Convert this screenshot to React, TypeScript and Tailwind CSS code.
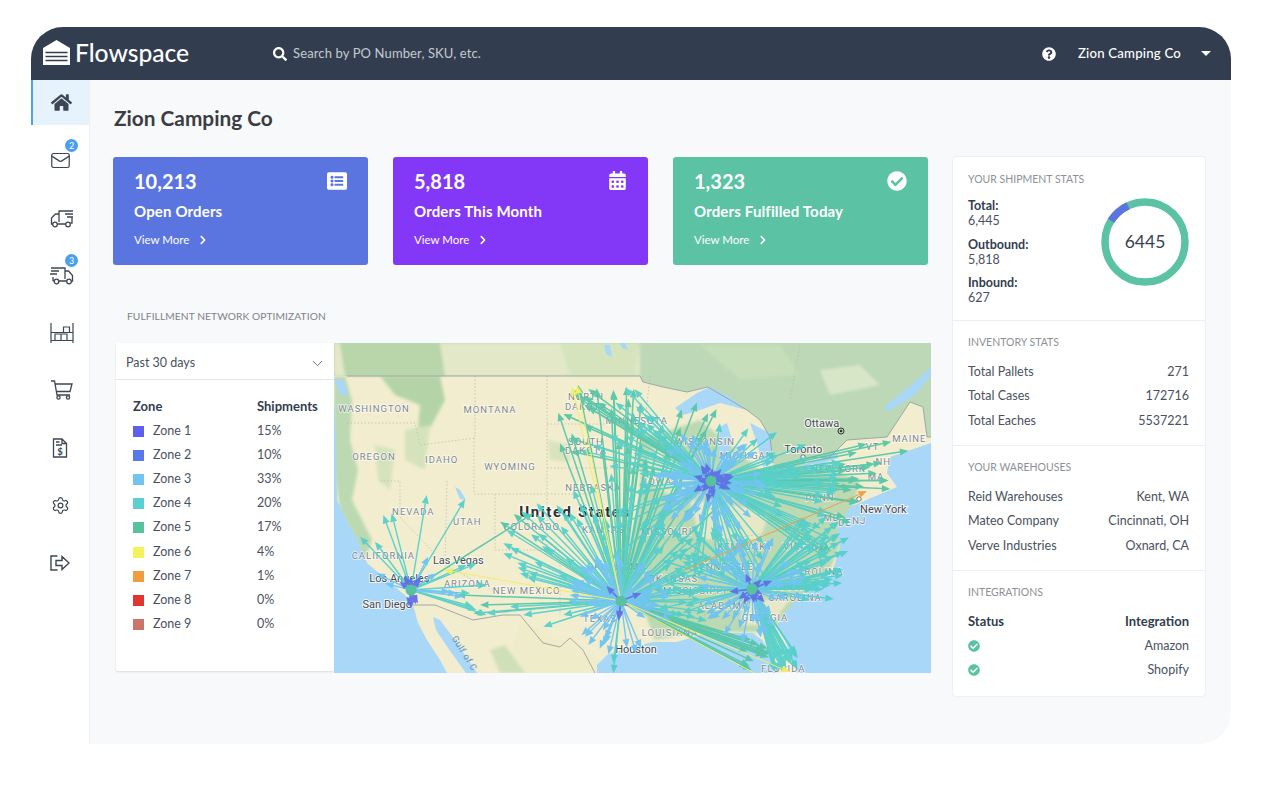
import { FaCalendarAlt, FaCheckCircle, FaChevronRight, FaHome, FaListAlt, FaQuestionCircle, FaSearch } from "react-icons/fa";
import { ChevronDown, Mail, Settings } from "lucide-react";
import type { ReactNode } from "react";

const cards = [
  { value: "10,213", label: "Open Orders", bg: "bg-[#5a75e0]", icon: <FaListAlt size={20} /> },
  { value: "5,818", label: "Orders This Month", bg: "bg-[#8438f7]", icon: <FaCalendarAlt size={19} /> },
  { value: "1,323", label: "Orders Fulfilled Today", bg: "bg-[#5bc2a4]", icon: <FaCheckCircle size={20} /> },
];

const zones = [
  { name: "Zone 1", pct: "15%", color: "bg-[#5f5fee]" },
  { name: "Zone 2", pct: "10%", color: "bg-[#5a78ec]" },
  { name: "Zone 3", pct: "33%", color: "bg-[#74c4f2]" },
  { name: "Zone 4", pct: "20%", color: "bg-[#5bcfd2]" },
  { name: "Zone 5", pct: "17%", color: "bg-[#58c1a0]" },
  { name: "Zone 6", pct: "4%", color: "bg-[#f5f25f]" },
  { name: "Zone 7", pct: "1%", color: "bg-[#ee9d40]" },
  { name: "Zone 8", pct: "0%", color: "bg-[#e3352f]" },
  { name: "Zone 9", pct: "0%", color: "bg-[#c9756a]" },
];

function TruckOut() {
  return (
    <svg width="24" height="20" viewBox="0 0 24 20" fill="none" stroke="currentColor" strokeWidth="1.3" className="ml-[3px]">
      <path d="M9 14V3h14M15 6h8M17 9h6M22 9v6h-1.5M15.500 16H7.500M9 6H5.500L1.500 10v6h1" />
      <circle cx="5" cy="16.500" r="2.300" />
      <circle cx="18" cy="16.500" r="2.300" />
    </svg>
  );
}

function TruckIn() {
  return (
    <svg width="24" height="20" viewBox="0 0 24 20" fill="none" stroke="currentColor" strokeWidth="1.3" className="ml-[3px]">
      <path d="M1 3h14v11M1 6h8M0 9h7M3 12v3.500h1M9 16h7.500M15 6h3.500l4 4.500v5.500h-1" />
      <circle cx="6.500" cy="16.500" r="2.300" />
      <circle cx="19" cy="16.500" r="2.300" />
    </svg>
  );
}

function Warehouse() {
  return (
    <svg width="24" height="20" viewBox="0 0 24 20" fill="none" stroke="currentColor" strokeWidth="1.2" className="ml-[3px]">
      <path d="M1 0v20M23 0v20M1 17.500h22M1 9.500h22" />
      <path d="M5 17V11h12v6M11 11v6M13.500 9V4h6v5" />
    </svg>
  );
}

function Cart() {
  return (
    <svg width="22" height="20" viewBox="0 0 22 20" fill="none" stroke="currentColor" strokeWidth="1.3" className="ml-[3px]">
      <path d="M0 1h3.500l2.500 14h13M4.200 4H21l-2 7.500H5.500" />
      <circle cx="7.500" cy="17.500" r="1.600" />
      <circle cx="17" cy="17.500" r="1.600" />
    </svg>
  );
}

function Invoice() {
  return (
    <svg width="16" height="20" viewBox="0 0 16 20" fill="none" stroke="currentColor" strokeWidth="1.3">
      <path d="M1.500 1h8.500l4.500 4.500v13.500h-13zM10 1v4.500h4.500M4 4h3.500M4 7h6" />
      <text x="8" y="16.500" textAnchor="middle" fontSize="9.500" fontWeight="700" fill="currentColor" stroke="none">$</text>
    </svg>
  );
}

function Logout() {
  return (
    <svg width="20" height="16" viewBox="0 0 20 16" fill="none" stroke="currentColor" strokeWidth="1.4">
      <path d="M7.500 1H1v14h6.500M6 5.500h6V1.500L19 8l-7 6.500V10.500H6z" />
    </svg>
  );
}

const navItems: { icon: ReactNode; badge?: string; active?: boolean }[] = [
  { icon: <FaHome size={21} />, active: true },
  { icon: <Mail size={21} strokeWidth={1.4} />, badge: "2" },
  { icon: <TruckOut /> },
  { icon: <TruckIn />, badge: "3" },
  { icon: <Warehouse /> },
  { icon: <Cart /> },
  { icon: <Invoice /> },
  { icon: <Settings size={19} strokeWidth={1.5} /> },
  { icon: <Logout /> },
];

// ---- map ----

type Pt = [number, number];
const c5 = (x: number, y: number): Pt => [330 + x / 3, 340 + y / 3];
const c6 = (x: number, y: number): Pt => [620 + x / 3, 340 + y / 3];

const LA: Pt = [411, 590];
const DAL: Pt = [621, 601];
const MID: Pt = [711, 481];
const ATL: Pt = [752, 589];

function makeRng(seed: number) {
  let s = seed;
  return () => {
    s = (s + 0x6d2b79f5) | 0;
    let t = Math.imul(s ^ (s >>> 15), 1 | s);
    t = (t + Math.imul(t ^ (t >>> 7), 61 | t)) ^ t;
    return ((t ^ (t >>> 14)) >>> 0) / 4294967296;
  };
}

type Arrow = { from: Pt; to: Pt; color: string; width: number; rank: number };

function zoneOf(from: Pt, to: Pt) {
  const d = Math.hypot(to[0] - from[0], to[1] - from[1]);
  if (d < 24) return { color: "#5a6de8", width: 1.6, rank: 5 };
  if (d < 58) return { color: "#6cc3f4", width: 1.4, rank: 4 };
  if (d < 135) return { color: "#52cfca", width: 1.4, rank: 3 };
  return { color: "#55c6a8", width: 1.5, rank: 2 };
}

function buildArrows() {
  const rng = makeRng(42);
  const out: Arrow[] = [];
  const add = (from: Pt, to: Pt) => out.push({ from, to, ...zoneOf(from, to) });
  const cloud = (from: Pt, x0: number, y0: number, x1: number, y1: number, n: number) => {
    for (let i = 0; i < n; i++) add(from, [x0 + rng() * (x1 - x0), y0 + rng() * (y1 - y0)]);
  };
  const ring = (from: Pt, r0: number, r1: number, n: number) => {
    for (let i = 0; i < n; i++) {
      const a = rng() * Math.PI * 2;
      const r = r0 + rng() * (r1 - r0);
      add(from, [from[0] + Math.cos(a) * r, from[1] + Math.sin(a) * r]);
    }
  };

  // west coast hub, read off the reference
  const laTargets: Pt[] = [
    c5(290, 465), c5(405, 478), c5(185, 520), c5(160, 525), c5(90, 590), c5(135, 605), c5(295, 650),
    c5(320, 700), c5(140, 700), c5(165, 730), c5(470, 735), c5(380, 760), c5(400, 770), c5(420, 760),
    c5(440, 810), c5(470, 825), c5(610, 520), c5(440, 670), c5(410, 675), c5(360, 755), c5(430, 800),
  ];
  laTargets.forEach((t) => add(LA, t));
  ring(LA, 10, 20, 9);

  // texas hub
  const dalTargets: Pt[] = [
    c5(510, 545), c5(530, 570), c5(620, 490), c5(680, 495), c5(740, 535), c5(520, 610), c5(520, 640),
    c5(570, 700), c5(640, 860), c5(775, 915), c5(820, 915), c5(850, 970), c5(850, 1000), c5(450, 795),
    c5(430, 820), c5(470, 820), c5(540, 800), c5(580, 825), c5(700, 825), c5(380, 765), c5(690, 310),
    c5(685, 218), c5(745, 135), c5(800, 145), c5(850, 150), c5(890, 140), c5(725, 280), c5(730, 450),
    c5(750, 490),
  ];
  dalTargets.forEach((t) => add(DAL, t));
  cloud(DAL, 510, 510, 610, 590, 26);
  cloud(DAL, 590, 385, 720, 520, 42);
  cloud(DAL, 640, 520, 720, 600, 26);
  cloud(DAL, 640, 590, 710, 625, 14);
  cloud(DAL, 745, 640, 790, 672, 14);
  ring(DAL, 26, 56, 46);
  ring(DAL, 10, 22, 4);

  // midwest hub
  cloud(MID, 560, 385, 660, 470, 34);
  cloud(MID, 600, 470, 680, 560, 18);
  cloud(MID, 790, 440, 892, 490, 32);
  cloud(MID, 770, 490, 860, 560, 26);
  cloud(MID, 690, 530, 770, 590, 20);
  cloud(MID, 660, 430, 780, 530, 40);
  add(MID, c6(385, 265));
  add(MID, c6(300, 250));
  add(MID, c6(740, 312));
  add(MID, c6(865, 332));
  add(MID, c6(750, 382));
  ring(MID, 26, 56, 52);
  ring(MID, 11, 23, 15);

  // southeast hub
  cloud(ATL, 772, 648, 800, 672, 26);
  cloud(ATL, 790, 515, 850, 590, 42);
  cloud(ATL, 800, 575, 835, 600, 12);
  cloud(ATL, 650, 520, 720, 590, 12);
  cloud(ATL, 640, 590, 720, 620, 10);
  cloud(ATL, 705, 520, 745, 560, 10);
  ring(ATL, 26, 56, 36);
  ring(ATL, 11, 23, 10);

  return out.sort((a, b) => a.rank - b.rank);
}

const arrows = buildArrows();

function ArrowLine({ from, to, color, width }: { from: Pt; to: Pt; color: string; width: number }) {
  const dx = to[0] - from[0];
  const dy = to[1] - from[1];
  const len = Math.hypot(dx, dy) || 1;
  const ux = dx / len;
  const uy = dy / len;
  const size = 8.5;
  const half = 3.5;
  const bx = to[0] - ux * size;
  const by = to[1] - uy * size;
  const points = `${to[0]},${to[1]} ${bx - uy * half},${by + ux * half} ${bx + uy * half},${by - ux * half}`;
  return (
    <g>
      <line x1={from[0]} y1={from[1]} x2={bx} y2={by} stroke={color} strokeWidth={width} />
      <polygon points={points} fill={color} />
    </g>
  );
}

const poly = (pts: Pt[]) => pts.map((p) => p.join(",")).join(" ");

const stateLabels: [string, number, number][] = [
  ["WASHINGTON", ...c5(132, 205)], ["MONTANA", ...c5(480, 207)], ["OREGON", ...c5(132, 348)], ["IDAHO", ...c5(335, 358)],
  ["WYOMING", ...c5(540, 380)], ["NEVADA", ...c5(250, 515)], ["UTAH", ...c5(412, 543)], ["CALIFORNIA", ...c5(160, 647)],
  ["ARIZONA", ...c5(412, 730)], ["NEW MEXICO", ...c5(590, 752)], ["COLORADO", ...c5(605, 560)], ["KANSAS", ...c5(820, 567)],
  ["NEBRASKA", ...c5(790, 443)], ["SOUTH", ...c5(768, 303)], ["DAKOTA", ...c5(768, 331)], ["NORTH", ...c5(768, 170)],
  ["DAKOTA", ...c5(768, 199)], ["TEXAS", ...c5(810, 835)], ["OKLAHOMA", ...c5(860, 680)], ["MINNESOTA", ...c5(920, 240)],
  ["MAINE", ...c6(868, 295)], ["VT", ...c6(758, 320)], ["NH", ...c6(790, 365)], ["NEW YORK", ...c6(655, 385)],
  ["MA", ...c6(768, 408)], ["PENN", ...c6(600, 472)], ["MD", ...c6(635, 532)], ["DE", ...c6(675, 548)], ["NJ", ...c6(718, 540)],
  ["MICHIGAN", ...c6(380, 347)], ["WISCONSIN", ...c6(255, 305)], ["KENTUCKY", ...c6(375, 620)], ["VIRGINIA", ...c6(560, 620)],
  ["TENNESSEE", ...c6(310, 678)], ["ARKANSAS", ...c6(150, 715)], ["MISSISSIPPI", ...c6(225, 752)], ["ALABAMA", ...c6(310, 795)],
  ["GEORGIA", ...c6(435, 832)], ["LOUISIANA", ...c6(150, 877)], ["CAROLINA", ...c6(590, 695)], ["SOUTH", ...c6(510, 738)],
  ["CAROLINA", ...c6(525, 772)], ["FLORIDA", ...c6(490, 985)], ["MISSOURI", ...c6(140, 575)], ["IOWA", ...c6(115, 425)],
];

const cityLabels: [string, number, number][] = [
  ["Las Vegas", ...c5(385, 660)], ["Los Angeles", ...c5(208, 715)], ["San Diego", ...c5(172, 792)], ["Houston", ...c5(918, 928)],
  ["Ottawa", ...c6(605, 250)], ["Toronto", ...c6(550, 327)], ["New York", ...c6(790, 507)],
];

function NetworkMap() {
  return (
    <svg className="block h-[330px] w-[597px] shrink-0" viewBox="334 343 597 330" style={{ fontFamily: "Roboto, sans-serif" }}>
      <defs>
        <filter id="soft" x="-10%" y="-10%" width="120%" height="120%">
          <feGaussianBlur stdDeviation="1.6" />
        </filter>
      </defs>
      <rect x="334" y="343" width="597" height="330" fill="#f2edcf" />

      {/* green terrain */}
      <g filter="url(#soft)" fill="#bcd9b2">
        <polygon points={poly([[334, 376], [345, 376], [352, 400], [350, 440], [358, 470], [352, 500], [372, 540], [365, 560], [340, 510], [334, 470]])} />
        <polygon points={poly([[380, 376], [440, 376], [445, 400], [428, 432], [418, 428], [420, 405], [395, 395]])} fill="#b4d4a8" />
        <polygon points={poly([[405, 430], [430, 425], [425, 470], [405, 460]])} fill="#d5e3bd" />
        <polygon points={poly([[375, 445], [395, 450], [390, 490], [378, 480]])} fill="#d5e3bd" />
        <polygon points={poly([[548, 440], [570, 445], [570, 462], [550, 460]])} fill="#d7e4bd" />
        <polygon points={poly([[640, 440], [700, 420], [760, 470], [830, 470], [860, 480], [850, 520], [830, 570], [790, 610], [770, 632], [700, 632], [655, 640], [625, 560], [640, 500]])} />
        <polygon points={poly([[655, 445], [700, 475], [680, 500], [640, 480]])} fill="#e5e7c4" />
        <polygon points={poly([[690, 500], [770, 510], [760, 540], [700, 540]])} fill="#e9e8c6" />
        <polygon points={poly([[745, 600], [790, 600], [770, 625], [740, 625]])} fill="#e9e8c6" />
        <polygon points={poly([[520, 620], [560, 640], [600, 660], [600, 673], [505, 673]])} fill="#eeecc9" />
        <polygon points={poly([[490, 650], [505, 645], [525, 673], [500, 673]])} fill="#cfe0b8" />
      </g>

      {/* canada */}
      <polygon
        points={poly([[334, 343], [931, 343], [931, 437], [927, 437], [923, 407], [910, 402], [887, 437], [847, 440], [830, 457], [807, 458], [803, 468], [780, 480], [773, 463], [770, 437], [760, 420], [747, 410], [708, 387], [687, 392], [663, 387], [643, 382], [640, 376], [334, 376]])}
        fill="#bcd8b6"
      />
      <g filter="url(#soft)">
        <polygon points={poly([[334, 343], [640, 343], [640, 376], [334, 376]])} fill="#e3e8c8" />
        <polygon points={poly([[340, 343], [440, 343], [445, 376], [345, 376]])} fill="#b8d6aa" />
        <polygon points={poly([[560, 343], [640, 343], [635, 376], [570, 376]])} fill="#d6e4be" />
        <polygon points={poly([[700, 345], [780, 345], [800, 375], [740, 380]])} fill="#c6deb9" />
        <polygon points={poly([[820, 370], [860, 365], [880, 385], [830, 395]])} fill="#d8e6c8" />
      </g>

      {/* water */}
      <g fill="#a9d7f7">
        <polygon points={poly([[334, 400], [336, 440], [337, 500], [350, 527], [358, 540], [367, 563], [387, 580], [407, 597], [413, 605], [418, 623], [427, 640], [440, 660], [447, 673], [334, 673]])} />
        <polygon points={poly([[433, 617], [440, 620], [455, 640], [477, 673], [466, 673], [448, 648], [436, 630]])} />
        <polygon points={poly([[597, 673], [597, 665], [607, 655], [620, 650], [653, 642], [677, 642], [693, 637], [707, 633], [753, 633], [762, 640], [770, 652], [778, 673]])} />
        <polygon points={poly([[797, 673], [785, 640], [777, 625], [787, 610], [807, 590], [833, 570], [840, 547], [837, 530], [850, 507], [897, 487], [887, 473], [890, 457], [931, 443], [931, 673]])} />
        <polygon points={poly([[931, 367], [931, 375], [915, 395], [887, 412], [885, 406], [908, 388]])} />
        <polygon points={poly([[675, 408], [697, 393], [710, 387], [730, 397], [747, 410], [720, 403], [700, 410], [683, 415]])} />
        <polygon points={poly([[720, 427], [727, 423], [732, 440], [723, 467], [718, 453]])} />
        <polygon points={poly([[750, 423], [770, 433], [773, 463], [763, 467], [757, 443]])} />
        <polygon points={poly([[777, 477], [803, 467], [800, 472], [780, 482]])} />
        <polygon points={poly([[802, 465], [837, 453], [838, 458], [805, 470]])} />
        <polygon points={poly([[334, 378], [345, 382], [348, 395], [340, 395]])} />
        <polygon points={poly([[455, 487], [460, 490], [466, 500], [460, 499]])} />
        <polygon points={poly([[604, 345], [610, 345], [612, 357], [606, 354]])} />
        <polygon points={poly([[620, 343], [625, 343], [628, 350], [622, 348]])} />
      </g>

      {/* borders */}
      <g fill="none" stroke="#9aa0a4" strokeWidth="0.9">
        <polyline points={poly([[347, 376], [640, 376], [643, 382], [663, 387], [687, 392], [708, 387], [747, 410], [760, 420], [770, 437], [773, 463]])} />
        <polyline points={poly([[807, 458], [830, 457], [847, 440], [887, 437], [910, 402], [923, 407], [927, 437], [931, 437]])} />
        <polyline points={poly([[413, 605], [435, 605], [473, 620], [503, 615], [520, 615], [543, 643], [560, 647], [570, 638], [583, 650], [595, 673]])} />
      </g>
      <g fill="none" stroke="#b6b9a8" strokeWidth="0.7" strokeDasharray="1.500 2">
        <polyline points={poly([[380, 481], [400, 481], [400, 517], [445, 565]])} />
        <polyline points={poly([[347, 423], [372, 423], [415, 423], [420, 445], [475, 438], [475, 376]])} />
        <polyline points={poly([[474, 438], [474, 494], [595, 494]])} />
        <polyline points={poly([[447, 481], [445, 565], [493, 590]])} />
        <polyline points={poly([[495, 494], [495, 550], [560, 550], [560, 615]])} />
        <polyline points={poly([[547, 376], [547, 490], [547, 550]])} />
        <polyline points={poly([[547, 424], [630, 424]])} />
        <polyline points={poly([[547, 468], [640, 468]])} />
        <polyline points={poly([[650, 376], [640, 470], [650, 540], [650, 610]])} />
        <polyline points={poly([[650, 540], [720, 540], [790, 530]])} />
        <polyline points={poly([[700, 590], [708, 633]])} />
        <polyline points={poly([[800, 345], [790, 400]])} />
      </g>

      {/* labels */}
      <g textAnchor="middle" fontSize="9.500" letterSpacing="1" fill="#80868a" stroke="#ffffff" strokeWidth="1.6" paintOrder="stroke" strokeOpacity="0.75">
        {stateLabels.map(([name, x, y], i) => (
          <text key={i} x={x} y={y + 3.5}>{name}</text>
        ))}
      </g>
      <g textAnchor="middle" fontSize="11" fill="#474b4f" stroke="#ffffff" strokeWidth="2" paintOrder="stroke" strokeOpacity="0.85">
        {cityLabels.map(([name, x, y]) => (
          <text key={name} x={x} y={y + 4}>{name}</text>
        ))}
      </g>
      <text x="575" y="517" textAnchor="middle" fontSize="15" fontWeight="700" letterSpacing="1.600" fill="#2c2f33" stroke="#ffffff" strokeWidth="2.5" paintOrder="stroke" strokeOpacity="0.8">
        United States
      </text>
      <text x="462" y="655" textAnchor="middle" fontSize="9" letterSpacing="0.5" fill="#5a8fc4" transform="rotate(58 462 655)">
        Gulf of C
      </text>
      <circle cx="841" cy="431" r="3" fill="none" stroke="#333" strokeWidth="1" />
      <circle cx="841" cy="431" r="1.300" fill="#333" />
      <circle cx="803" cy="457" r="2.200" fill="#fff" stroke="#555" strokeWidth="0.8" />
      <circle cx="859" cy="499" r="2.200" fill="#fff" stroke="#555" strokeWidth="0.8" />

      {/* shipping lanes */}
      <g opacity="0.93">
        {arrows.map((a, i) => (
          <ArrowLine key={i} from={a.from} to={a.to} color={a.color} width={a.width} />
        ))}
        <ArrowLine from={DAL} to={[577, 385]} color="#f2ee60" width={1} />
        <ArrowLine from={DAL} to={[572, 387]} color="#f2ee60" width={1} />
        <ArrowLine from={DAL} to={[444, 570]} color="#f2ee60" width={1} />
        <ArrowLine from={DAL} to={[767, 680]} color="#f2ee60" width={1} />
        <ArrowLine from={DAL} to={[790, 672]} color="#f2ee60" width={1} />
        <ArrowLine from={[685, 570]} to={[867, 491]} color="#ee9d40" width={1} />
      </g>
      <g fill="#58c1a0">
        <circle cx={LA[0]} cy={LA[1]} r="5.500" />
        <circle cx={DAL[0]} cy={DAL[1]} r="5.500" />
        <circle cx={MID[0]} cy={MID[1]} r="5.500" />
        <circle cx={ATL[0]} cy={ATL[1]} r="5.500" />
      </g>
    </svg>
  );
}

function StatSection({ title, rows }: { title: string; rows: [string, string][] }) {
  return (
    <section className="h-[125px] border-b border-[#eceef1] pl-[15px] pr-4 pt-[14px]">
      <h3 className="text-[10.500px] font-normal leading-[14px] text-[#8d9196]">{title}</h3>
      <div className="mt-[11px]">
        {rows.map(([k, v]) => (
          <div key={k} className="flex h-[24.400px] items-center justify-between text-[12.500px] text-[#4a5260]">
            <span>{k}</span>
            <span>{v}</span>
          </div>
        ))}
      </div>
    </section>
  );
}

export default function App() {
  return (
    <div className="h-[812px] w-[1270px] overflow-hidden bg-white pl-[31px] pt-[27px] [font-family:Lato,sans-serif]">
      <div className="flex h-[717px] w-[1200px] flex-col overflow-hidden rounded-t-[32px] rounded-br-[32px] bg-white">
        <header className="flex h-[53px] shrink-0 items-center bg-[#323d4f] pl-3 pr-[20px] text-white">
          <svg width="27" height="25" viewBox="0 0 27 25" className="mb-[3px] shrink-0">
            <polygon points="0,8 13.500,0 27,8 27,25 0,25" fill="#fff" />
            <path d="M2.500 12.500h22M2.500 16.500h22M2.500 20.500h22" stroke="#323d4f" strokeWidth="1.300" />
          </svg>
          <span className="ml-[5px] text-[24.600px] font-medium leading-none">Flowspace</span>
          <FaSearch size={14} className="ml-[84px] text-white" />
          <span className="ml-[6px] pt-px text-[13px] tracking-[0.12px] text-[#c6cad0]">Search by PO Number, SKU, etc.</span>
          <FaQuestionCircle size={14} className="ml-auto" />
          <span className="ml-[22px] text-[13.200px] font-medium tracking-[0.2px]">Zion Camping Co</span>
          <span className="ml-[20px] h-0 w-0 border-x-[5px] border-t-[5px] border-x-transparent border-t-white" />
        </header>

        <div className="flex min-h-0 flex-1">
          <nav className="flex w-[58px] shrink-0 flex-col gap-[12.600px] bg-white">
            {navItems.map((item, i) => (
              <div
                key={i}
                className={`relative flex h-[45px] items-center justify-center text-[#3d4654] ${item.active ? "border-l-2 border-[#4aa3ec] bg-[#e6f3fd]" : ""}`}
              >
                {item.icon}
                {item.badge && (
                  <span className="absolute left-[34px] top-[1px] flex h-[13px] w-[13px] items-center justify-center rounded-full bg-[#4a9fec] text-[9px] leading-none text-white">
                    {item.badge}
                  </span>
                )}
              </div>
            ))}
          </nav>

          <main className="min-w-0 flex-1 border-l border-[#eef0f4] bg-[#f8f9fb] pl-[23px] pr-[26px]">
            <h1 className="ml-px mt-[25px] text-[20.800px] font-bold leading-[26px] text-[#3a3d42]">Zion Camping Co</h1>
            <div className="mt-[26px] flex gap-[21px]">
              <div className="w-[818px] shrink-0">
                <div className="flex gap-[25px]">
                  {cards.map((card) => (
                    <div key={card.label} className={`relative h-[108px] w-[255px] rounded-[3px] pl-[21px] text-white ${card.bg}`}>
                      <div className="pt-[11px] text-[20px] font-bold leading-[26px]">{card.value}</div>
                      <div className="mt-[7px] text-[15px] font-bold leading-[20px] tracking-[0.15px]">{card.label}</div>
                      <div className="mt-[11px] flex items-center text-[11.500px] leading-[16px] text-white">
                        View More
                        <FaChevronRight size={10} className="ml-[9px]" />
                      </div>
                      <span className="absolute right-[21px] top-[14px]">{card.icon}</span>
                    </div>
                  ))}
                </div>

                <div className="mt-[44px] pl-[14px] text-[10.200px] leading-[14px] tracking-[0.1px] text-[#7e8287]">
                  FULFILLMENT NETWORK OPTIMIZATION
                </div>

                <div className="ml-[3px] mt-[20px] flex items-start">
                  <div className="h-[328px] w-[218px] shrink-0 rounded-b-[2px] bg-white shadow-[0_1px_2px_rgba(0,0,0,0.12)]">
                    <div className="flex h-[37px] items-center justify-between border-b border-[#e3e5e8] pb-0 pl-[10px] pr-[8px] pt-[4px] text-[12.500px] text-[#4a5260]">
                      Past 30 days
                      <ChevronDown size={17} strokeWidth={1.1} />
                    </div>
                    <div className="pl-[17px] pr-4 pt-[15px] text-[12.500px] text-[#4a5260]">
                      <div className="flex h-[24px] items-center text-[13px] font-bold text-[#323d4f]">
                        <span className="w-[124px]">Zone</span>
                        <span>Shipments</span>
                      </div>
                      {zones.map((zone) => (
                        <div key={zone.name} className="flex h-[24.200px] items-center">
                          <span className={`h-[11px] w-[11px] shrink-0 ${zone.color}`} />
                          <span className="ml-[9px] w-[104px]">{zone.name}</span>
                          <span>{zone.pct}</span>
                        </div>
                      ))}
                    </div>
                  </div>
                  <NetworkMap />
                </div>
              </div>

              <aside className="ml-px h-[539px] w-[252px] shrink-0 rounded-[3px] bg-white shadow-[0_0_2px_rgba(0,0,0,0.14)]">
                <section className="flex h-[164px] justify-between border-b border-[#eceef1] pl-[15px] pr-[16px] pt-[15px]">
                  <div>
                    <h3 className="text-[10.500px] font-normal leading-[14px] text-[#8d9196]">YOUR SHIPMENT STATS</h3>
                    <div className="mt-[12px] text-[12.500px] leading-[15.300px] text-[#4a5260]">
                      <div className="font-bold text-[#323d4f]">Total:</div>
                      <div>6,445</div>
                      <div className="mt-[8px] font-bold text-[#323d4f]">Outbound:</div>
                      <div>5,818</div>
                      <div className="mt-[8px] font-bold text-[#323d4f]">Inbound:</div>
                      <div>627</div>
                    </div>
                  </div>
                  <svg width="88" height="88" viewBox="0 0 88 88" className="mt-[26px] shrink-0">
                    <circle cx="44" cy="44" r="40" fill="none" stroke="#5bc2a4" strokeWidth="7.500" />
                    <circle cx="44" cy="44" r="40" fill="none" stroke="#5a75e0" strokeWidth="7.500" strokeDasharray="23 228" transform="rotate(-148 44 44)" />
                    <text x="44" y="50" textAnchor="middle" fontSize="17.500" fill="#3a4350" fontFamily="Lato, sans-serif">6445</text>
                  </svg>
                </section>
                <StatSection title="INVENTORY STATS" rows={[["Total Pallets", "271"], ["Total Cases", "172716"], ["Total Eaches", "5537221"]]} />
                <StatSection title="YOUR WAREHOUSES" rows={[["Reid Warehouses", "Kent, WA"], ["Mateo Company", "Cincinnati, OH"], ["Verve Industries", "Oxnard, CA"]]} />
                <section className="pl-[15px] pr-4 pt-[14px]">
                  <h3 className="text-[10.500px] font-normal leading-[14px] text-[#8d9196]">INTEGRATIONS</h3>
                  <div className="mt-[10.500px] text-[12.500px] text-[#4a5260]">
                    <div className="flex h-[24.400px] items-center justify-between text-[13px] font-bold text-[#323d4f]">
                      <span>Status</span>
                      <span>Integration</span>
                    </div>
                    {["Amazon", "Shopify"].map((name) => (
                      <div key={name} className="flex h-[24.400px] items-center justify-between">
                        <FaCheckCircle size={12} className="text-[#5bc2a4]" />
                        <span>{name}</span>
                      </div>
                    ))}
                  </div>
                </section>
              </aside>
            </div>
          </main>
        </div>
      </div>
    </div>
  );
}
